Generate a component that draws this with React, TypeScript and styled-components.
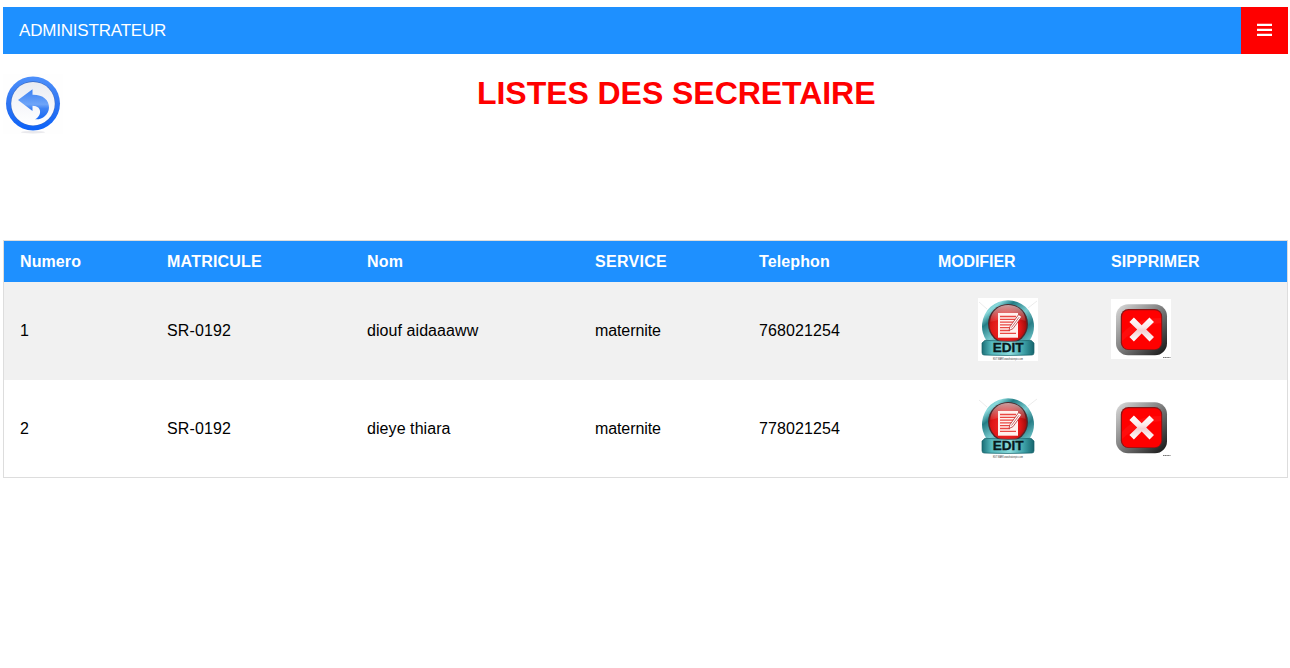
import React from 'react';
import styled, { createGlobalStyle } from 'styled-components';

const GlobalStyle = createGlobalStyle`
  * { box-sizing: border-box; }
  body {
    margin: 0;
    background: #fff;
    color: #000;
    font-family: "Liberation Sans", Arial, sans-serif;
    font-size: 16px;
  }
`;

const Page = styled.div`
  padding: 7px 2px 0 3px;
`;

const NavBar = styled.nav`
  display: flex;
  justify-content: space-between;
  height: 47px;
  background: #1e90ff;
  color: #fff;
  font-size: 17px;
`;

const Brand = styled.a`
  padding: 14px 16px;
  line-height: 19px;
  letter-spacing: -0.19px;
`;

const MenuButton = styled.button`
  display: flex;
  align-items: center;
  justify-content: center;
  width: 47px;
  padding: 0;
  border: 0;
  background: #f00;
`;

const Heading = styled.header`
  display: flex;
  align-items: flex-start;
  height: 186px;
  padding-top: 20px;
`;

const BackLink = styled.a`
  display: block;
  width: 60px;
  height: 60px;
`;

const Title = styled.h1`
  margin: 1px 0 0 414px;
  color: #f00;
  font-size: 32px;
  line-height: 37px;
  letter-spacing: -0.05px;
  white-space: nowrap;
`;

const Table = styled.table`
  width: 1285px;
  table-layout: fixed;
  border-collapse: separate;
  border-spacing: 0;
  border: 1px solid #ddd;
`;

const Col = styled.col<{ $w: number }>`
  width: ${(p) => p.$w}px;
`;

const HeadCell = styled.th<{ $tracking: number }>`
  height: 41px;
  padding: 0 16px;
  background: #1e90ff;
  color: #fff;
  text-align: left;
  letter-spacing: ${(p) => p.$tracking}px;
`;

const Row = styled.tr`
  height: 98px;
  &:nth-child(odd) { background: #f1f1f1; }
  &:last-child { height: 97px; }
`;

const Cell = styled.td<{ $tracking: number }>`
  padding: 0 16px;
  line-height: 18px;
  letter-spacing: ${(p) => p.$tracking}px;
`;

const ActionCell = styled.td<{ $top: number; $left: number }>`
  padding: ${(p) => p.$top}px 0 0 ${(p) => p.$left}px;
  vertical-align: top;
`;

const Picture = styled.svg`
  display: block;
`;

const BackIcon = () => (
  <Picture width="60" height="60" viewBox="0 0 60 60">
    <defs>
      <linearGradient id="ring" x1="0" y1="0" x2="0" y2="1">
        <stop offset="0" stopColor="#4d90fb" />
        <stop offset=".5" stopColor="#2f75f2" />
        <stop offset="1" stopColor="#0c62f8" />
      </linearGradient>
      <linearGradient id="face" x1="0" y1="0" x2="0" y2="1">
        <stop offset="0" stopColor="#e9ebf1" />
        <stop offset=".4" stopColor="#f3f4f9" />
        <stop offset="1" stopColor="#fff" />
      </linearGradient>
      <linearGradient id="arrow" x1="0" y1="0" x2="0" y2="1">
        <stop offset="0" stopColor="#3a80f3" />
        <stop offset=".5" stopColor="#6fa5f8" />
        <stop offset=".64" stopColor="#3f83f3" />
        <stop offset="1" stopColor="#1768f5" />
      </linearGradient>
    </defs>
    <rect width="60" height="60" fill="#fefefe" />
    <ellipse cx="30" cy="58.2" rx="12" ry="1.2" fill="#e9e9ed" />
    <circle cx="30" cy="29.5" r="27" fill="url(#ring)" />
    <circle cx="30" cy="29.5" r="22.3" fill="#3a68bd" />
    <circle cx="30" cy="29.7" r="21.8" fill="url(#face)" />
    <path d="M15 26 29.5 15.3V20.7C40 20.5 46.2 26 46 33.5C45.8 41 39 46 32 45.3C38.5 42.5 40 32 29.5 31.7V37Z" fill="url(#arrow)" />
  </Picture>
);

const EditIcon = () => (
  <Picture width="60" height="63" viewBox="0 0 60 63">
    <defs>
      <linearGradient id="teal" x1="0" y1="0" x2="1" y2="1">
        <stop offset="0" stopColor="#3d9ca2" />
        <stop offset=".2" stopColor="#8ad9db" />
        <stop offset=".33" stopColor="#237d85" />
        <stop offset=".55" stopColor="#78c9cd" />
        <stop offset=".75" stopColor="#277c85" />
        <stop offset="1" stopColor="#79d0d3" />
      </linearGradient>
      <linearGradient id="ribbon" x1="0" y1="0" x2="1" y2="0">
        <stop offset="0" stopColor="#1b6e76" />
        <stop offset=".18" stopColor="#55b9bd" />
        <stop offset=".55" stopColor="#8bdbdc" />
        <stop offset=".8" stopColor="#3fa2a9" />
        <stop offset="1" stopColor="#16656d" />
      </linearGradient>
      <radialGradient id="ball" cx=".45" cy=".6" r=".6">
        <stop offset="0" stopColor="#f73430" />
        <stop offset=".65" stopColor="#df1717" />
        <stop offset="1" stopColor="#8d0909" />
      </radialGradient>
      <linearGradient id="gloss" x1="0" y1="0" x2="0" y2="1">
        <stop offset="0" stopColor="#fff" stopOpacity=".6" />
        <stop offset="1" stopColor="#fff" stopOpacity=".06" />
      </linearGradient>
    </defs>
    <rect width="60" height="63" fill="#fff" />
    <path d="M1 4 9 11M59 3 50 10" stroke="#ddd" strokeWidth=".6" />
    <path d="M9 43.5A26 26 0 1 1 51 43.5Z" fill="url(#teal)" />
    <circle cx="30" cy="26" r="20" fill="#53272b" />
    <circle cx="30" cy="26.2" r="18.6" fill="url(#ball)" />
    <path d="M12.5 24C12 2 47 1 47.5 23Q30 18 12.5 24Z" fill="url(#gloss)" />
    <path d="M20 15H40V39.7H20Z" fill="#fff1ee" />
    <path d="M22 18.5H38M22 21.3H38M22 24.1H37M22 26.9H36M22 29.7H33M22 32.5H32M22 35.3H38" stroke="#e94743" strokeWidth="1.3" />
    <path d="m31 32.5 1-4 8.7-12 3 2.2-8.8 12Z" fill="#fff" stroke="#b4292a" strokeWidth=".8" />
    <path d="m33.5 29.5 7.6-10.3" stroke="#b4292a" strokeWidth=".7" />
    <path d="M7 42.3Q30 44.5 53 42.3L56 45V54.5Q56 57 54 57Q30 58 6 57Q4 57 4 54.5V45Z" fill="url(#ribbon)" stroke="#17616a" strokeWidth=".7" />
    <text x="30.2" y="53.6" textAnchor="middle" textLength="31" lengthAdjust="spacingAndGlyphs" fontFamily="Liberation Sans, sans-serif" fontWeight="bold" fontSize="12" fill="#08191c" stroke="#08191c" strokeWidth=".3">EDIT</text>
    <text x="30" y="62" textAnchor="middle" textLength="30" lengthAdjust="spacingAndGlyphs" fontFamily="Liberation Sans, sans-serif" fontSize="2.6" fill="#333">EDIT MARK www.featurepics.com</text>
  </Picture>
);

const DeleteIcon = () => (
  <Picture width="60" height="60" viewBox="0 0 60 60">
    <defs>
      <linearGradient id="metal" x1="0" y1="0" x2="1" y2="1">
        <stop offset="0" stopColor="#ddd" />
        <stop offset=".45" stopColor="#858585" />
        <stop offset="1" stopColor="#111" />
      </linearGradient>
      <linearGradient id="cross" x1="0" y1="0" x2="0" y2="1">
        <stop offset="0" stopColor="#fff" />
        <stop offset=".4" stopColor="#fbe9e9" />
        <stop offset=".55" stopColor="#f2d0d2" />
        <stop offset="1" stopColor="#fff" />
      </linearGradient>
    </defs>
    <rect width="60" height="60" fill="#fff" />
    <rect x="5" y="5.2" width="51" height="51" rx="12" fill="url(#metal)" />
    <rect x="9.8" y="10" width="41.4" height="41" rx="7.5" fill="#8b1515" />
    <rect x="11" y="11.2" width="39.2" height="39" rx="6.5" fill="#f00" />
    <path d="M11 35Q24 19 50.2 19V24Q28 26 11 42Z" fill="#fff" opacity=".05" />
    <path d="m22.9 18.4 7.8 7.8 7.8-7.8 4.5 4.5-7.8 7.5 7.8 7.5-4.5 4.5-7.8-7.8-7.8 7.8-4.5-4.5 7.8-7.5-7.8-7.5Z" fill="url(#cross)" />
    <path d="M52 58.5H59.5" stroke="#777" strokeWidth="1" strokeDasharray="1.4 .3" />
  </Picture>
);

const MenuIcon = () => (
  <svg width="15" height="15" viewBox="0 0 15 15">
    <path d="M0 1.85H15M0 6.85H15M0 11.85H15" stroke="#fff" strokeWidth="2.3" />
  </svg>
);

const columns = [
  { label: 'Numero', width: 147, head: 0.1, body: 0.1 },
  { label: 'MATRICULE', width: 200, head: 0.22, body: 0.13 },
  { label: 'Nom', width: 228, head: 0.25, body: 0.07 },
  { label: 'SERVICE', width: 164, head: 0.28, body: -0.1 },
  { label: 'Telephon', width: 179, head: 0.12, body: 0.1 },
  { label: 'MODIFIER', width: 173, head: -0.1, body: 0 },
  { label: 'SIPPRIMER', width: 192, head: 0.06, body: 0 },
];

const secretaries = [
  ['1', 'SR-0192', 'diouf aidaaaww', 'maternite', '768021254'],
  ['2', 'SR-0192', 'dieye thiara', 'maternite', '778021254'],
];

export default function App() {
  return (
    <Page>
      <GlobalStyle />
      <NavBar>
        <Brand>ADMINISTRATEUR</Brand>
        <MenuButton aria-label="Menu"><MenuIcon /></MenuButton>
      </NavBar>
      <Heading>
        <BackLink aria-label="Retour"><BackIcon /></BackLink>
        <Title>LISTES DES SECRETAIRE</Title>
      </Heading>
      <Table>
        <colgroup>
          {columns.map((c) => <Col key={c.label} $w={c.width} />)}
        </colgroup>
        <thead>
          <tr>
            {columns.map((c) => (
              <HeadCell key={c.label} $tracking={c.head}>{c.label}</HeadCell>
            ))}
          </tr>
        </thead>
        <tbody>
          {secretaries.map((s) => (
            <Row key={s[0]}>
              {s.map((value, i) => (
                <Cell key={i} $tracking={columns[i].body}>{value}</Cell>
              ))}
              <ActionCell $top={16} $left={56}><EditIcon /></ActionCell>
              <ActionCell $top={17} $left={16}><DeleteIcon /></ActionCell>
            </Row>
          ))}
        </tbody>
      </Table>
    </Page>
  );
}
